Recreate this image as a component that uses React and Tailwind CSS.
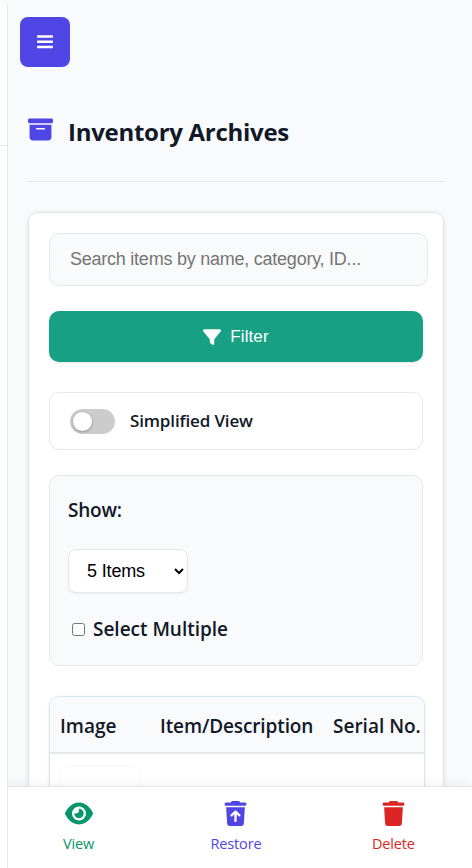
import React from "react";
import { FaBoxArchive, FaEye, FaFilter, FaTrash, FaTrashArrowUp } from "react-icons/fa6";

const columns = [
  { label: "Image", className: "w-[100px] tracking-[0px]" },
  { label: "Item/Description", className: "w-[173px] tracking-[-0.12px]" },
  { label: "Serial No.", className: "w-[108px] tracking-[0px]" },
];

function Action({ icon: Icon, label, className }) {
  return (
    <button className={"flex flex-1 flex-col items-center " + className}>
      <Icon size={25} className={label === "View" ? "w-7" : ""} />
      <span className="mt-[8px] text-[14.5px] leading-5 tracking-[-0.15px]">{label}</span>
    </button>
  );
}

function MenuIcon() {
  return (
    <svg width="16" height="14" viewBox="0 0 16 14" fill="currentColor">
      <rect x="0" y="0.2" width="16" height="2.5" rx="0.8" />
      <rect x="0" y="5.5" width="16" height="2.5" rx="0.8" />
      <rect x="0" y="10.7" width="16" height="2.5" rx="0.8" />
    </svg>
  );
}

export default function App() {
  return (
    <div className="flex h-[868px] w-[472px] overflow-hidden bg-[#f9fafc] font-['Open_Sans','Noto_Sans',sans-serif] text-[#111827]">
      <aside className="relative z-20 mt-[5px] w-2 shrink-0 border-r border-[#e5e7eb] bg-white">
        <div className="h-[141px] border-b border-[#e5e7eb]" />
      </aside>
      <div className="flex w-[464px] flex-col">
        <main className="h-[786px] overflow-hidden pr-7 pl-5">
          <button className="mt-[17px] -ml-2 flex size-[50px] items-center justify-center rounded-lg bg-[#4f46e5] text-white">
            <MenuIcon />
          </button>
          <header className="flex h-[115px] items-start border-b border-[#e5e7eb] pt-[50px]">
            <FaBoxArchive size={25} className="shrink-0 text-[#4f46e5]" />
            <h1 className="ml-[15px] whitespace-nowrap text-[24px] leading-[30px] font-bold tracking-[-0.28px]">Inventory Archives</h1>
          </header>
          <section className="mt-[30px] h-[700px] rounded-[10px] border border-[#e5e7eb] bg-white px-5 pt-5 shadow-[0_1px_4px_rgba(0,0,0,0.12)]">
            <input
              placeholder="Search items by name, category, ID..."
              className="block h-[53px] w-[379px] rounded-[10px] border border-[#e5e7eb] bg-[#f9fafc] px-5 font-['Liberation_Sans',sans-serif] text-[18px] tracking-[-0.24px] placeholder:text-[#757575]"
            />
            <button className="mt-[25px] flex h-[51px] w-[374px] items-center justify-center gap-[9px] rounded-[10px] bg-[#18a085] font-['Liberation_Sans',sans-serif] text-[17px] tracking-[0.1px] text-white shadow-[0_1px_2px_rgba(0,0,0,0.1)]">
              <FaFilter size={18} />
              Filter
            </button>
            <div className="mt-[30px] flex h-[58px] w-[374px] items-center rounded-[10px] border border-[#e5e7eb] px-5">
              <span className="flex h-[25px] w-[45px] items-center rounded-full bg-[#ccc] pl-[3px]">
                <span className="size-[19px] rounded-full bg-white shadow-[0_1px_3px_rgba(0,0,0,0.3)]" />
              </span>
              <span className="ml-[15px] text-[17px] font-semibold tracking-[-0.15px]">Simplified View</span>
            </div>
            <div className="mt-[25px] h-[191px] w-[374px] rounded-[10px] border border-[#e5e7eb] bg-[#f9fafc] px-[18px]">
              <p className="pt-[20px] text-[19px] leading-[28px] font-semibold tracking-[-0.2px]">Show:</p>
              <select className="mt-[25px] block h-[44px] w-[120px] rounded-lg border border-[#e5e7eb] bg-white px-[14px] font-['Liberation_Sans',sans-serif] text-[18px] tracking-[-0.15px] text-black shadow-[0_1px_2px_rgba(0,0,0,0.05)]">
                <option>5 Items</option>
              </select>
              <label className="mt-[22px] ml-1 flex items-center">
                <input type="checkbox" className="size-[13px]" />
                <span className="ml-2 text-[19px] leading-[28px] font-semibold tracking-[-0.02px]">Select Multiple</span>
              </label>
            </div>
            <div className="mt-[30px] h-[200px] w-[376px] overflow-hidden rounded-[10px] border border-[#dde5f0] shadow-[0_1px_3px_rgba(0,0,0,0.1)]">
              <div className="flex h-[57px] items-center border-b-2 border-[#e5e7eb] bg-[#f9fafc] pt-[4px] text-[19px] font-semibold">
                {columns.map((c) => (
                  <div key={c.label} className={"shrink-0 whitespace-nowrap pl-[10px] " + c.className}>{c.label}</div>
                ))}
              </div>
              <div className="mt-[13px] ml-[10px] size-[80px] rounded-lg shadow-[0_0_2px_rgba(0,0,0,0.1)]" />
            </div>
          </section>
        </main>
        <nav className="z-10 -ml-2 flex h-[82px] shrink-0 border-t border-[#e5e7eb] bg-white pt-[14px] shadow-[0_-2px_10px_rgba(0,0,0,0.05)]">
          <Action icon={FaEye} label="View" className="text-[#059669]" />
          <Action icon={FaTrashArrowUp} label="Restore" className="text-[#4f46e5]" />
          <Action icon={FaTrash} label="Delete" className="text-[#dc2626]" />
        </nav>
      </div>
    </div>
  );
}
